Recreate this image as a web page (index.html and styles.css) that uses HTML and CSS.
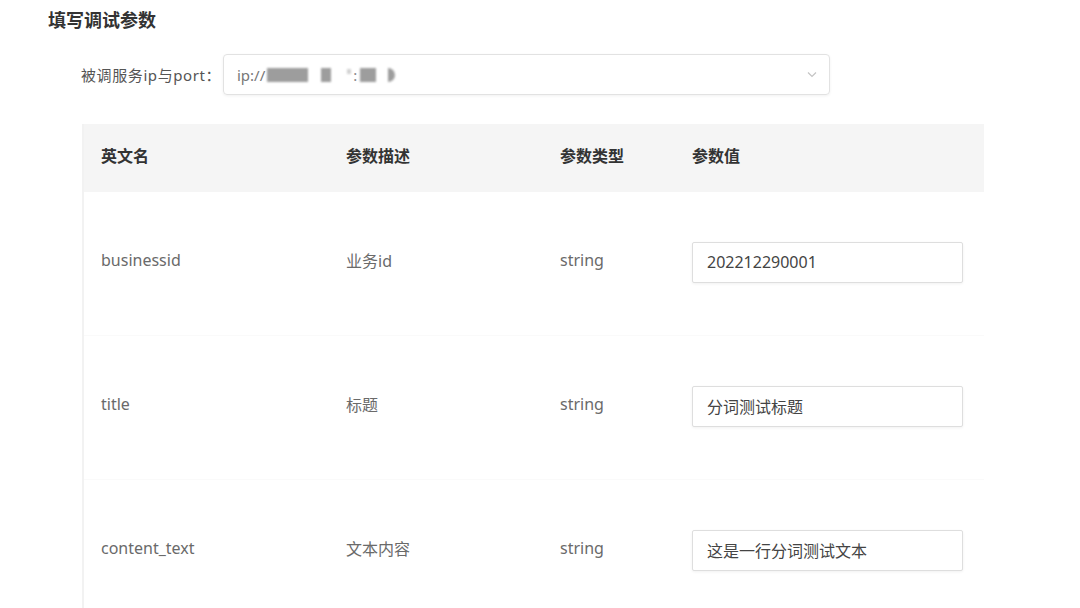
FILE: index.html
```html
<!DOCTYPE html>
<html>

<head>
    <meta charset="utf-8">
    <link rel="stylesheet" href="styles.css">
</head>

<body>
    <div class="page">
        <h3 class="title">填写调试参数</h3>

        <div class="field">
            <label class="field_label">被调服务ip与port：</label>
            <div class="select">
                <span class="select_text">ip://<span class="blot b1"></span><span class="blot b2"></span><span class="blot tick"></span><span class="colon">:</span><span class="blot b3"></span><span class="blot b4"></span></span>
                <svg class="arrow" width="10" height="7" viewBox="0 0 10 7">
                    <path d="M1 1.5 L5 5.5 L9 1.5" fill="none" stroke="#c4c4c4" stroke-width="1.2" />
                </svg>
            </div>
        </div>

        <table class="params">
            <thead>
                <tr>
                    <th class="c_name">英文名</th>
                    <th class="c_desc">参数描述</th>
                    <th class="c_type">参数类型</th>
                    <th class="c_val">参数值</th>
                </tr>
            </thead>
            <tbody>
                <tr>
                    <td>businessid</td>
                    <td>业务id</td>
                    <td>string</td>
                    <td><input class="val" type="text" value="202212290001"></td>
                </tr>
                <tr>
                    <td>title</td>
                    <td>标题</td>
                    <td>string</td>
                    <td><input class="val" type="text" value="分词测试标题"></td>
                </tr>
                <tr>
                    <td>content_text</td>
                    <td>文本内容</td>
                    <td>string</td>
                    <td><input class="val" type="text" value="这是一行分词测试文本"></td>
                </tr>
            </tbody>
        </table>
    </div>
</body>

</html>
```

FILE: styles.css
```css
body {
    margin: 0;
    background: #fff;
    font-family: "Noto Sans", "Noto Sans CJK SC", sans-serif;
    color: #666
}

.page {
    padding: 8px 0 0 48px
}

.title {
    margin: 0;
    font-size: 18px;
    line-height: 24px;
    font-weight: bold;
    color: #333
}

.field {
    display: flex;
    align-items: center;
    margin: 22px 0 0 33px
}

.field_label {
    font-size: 15px;
    letter-spacing: 0.6px;
    color: #555;
    width: 142px
}

.select {
    width: 607px;
    height: 41px;
    box-sizing: border-box;
    border: 1px solid #e2e2e2;
    border-radius: 4px;
    box-shadow: 0 1px 3px rgba(0, 0, 0, 0.06);
    display: flex;
    align-items: center;
    justify-content: space-between;
    padding: 0 12px 0 13px
}

.select_text {
    font-size: 15px;
    color: #777;
    display: flex;
    align-items: center
}

.blot {
    display: inline-block;
    height: 14px;
    background: #8c8c8c;
    filter: blur(1.2px);
    opacity: 0.85
}

.b1 {
    width: 41px;
    margin-left: 2px
}

.b2 {
    width: 10px;
    margin-left: 13px
}

.tick {
    width: 4px;
    height: 5px;
    margin: 0 2px 6px 16px;
    opacity: 0.4
}

.colon {
    color: #888
}

.b3 {
    width: 16px;
    margin-left: 3px
}

.b4 {
    width: 7px;
    margin-left: 12px;
    border-radius: 0 7px 7px 0
}

.params {
    margin: 29px 0 0 34px;
    width: 902px;
    border-collapse: collapse;
    border-left: 2px solid #f2f2f2;
    table-layout: fixed
}

.params th {
    background: #f5f5f5;
    height: 62px;
    text-align: left;
    font-size: 16px;
    font-weight: bold;
    color: #333;
    padding: 0 0 6px 17px
}

.c_name {
    width: 228px
}

.c_desc {
    width: 197px
}

.c_type {
    width: 115px
}

.params td {
    height: 135px;
    padding: 0 0 8px 17px;
    font-size: 16px;
    color: #6a6a6a;
    border-bottom: 1px solid #fafafa
}

.val {
    width: 271px;
    height: 41px;
    box-sizing: border-box;
    border: 1px solid #dedede;
    border-radius: 2px;
    box-shadow: 0 1px 3px rgba(0, 0, 0, 0.06);
    padding: 0 14px;
    font-family: "Noto Sans", "Noto Sans CJK SC", sans-serif;
    font-size: 16px;
    color: #444;
    margin-top: 5px
}
```
